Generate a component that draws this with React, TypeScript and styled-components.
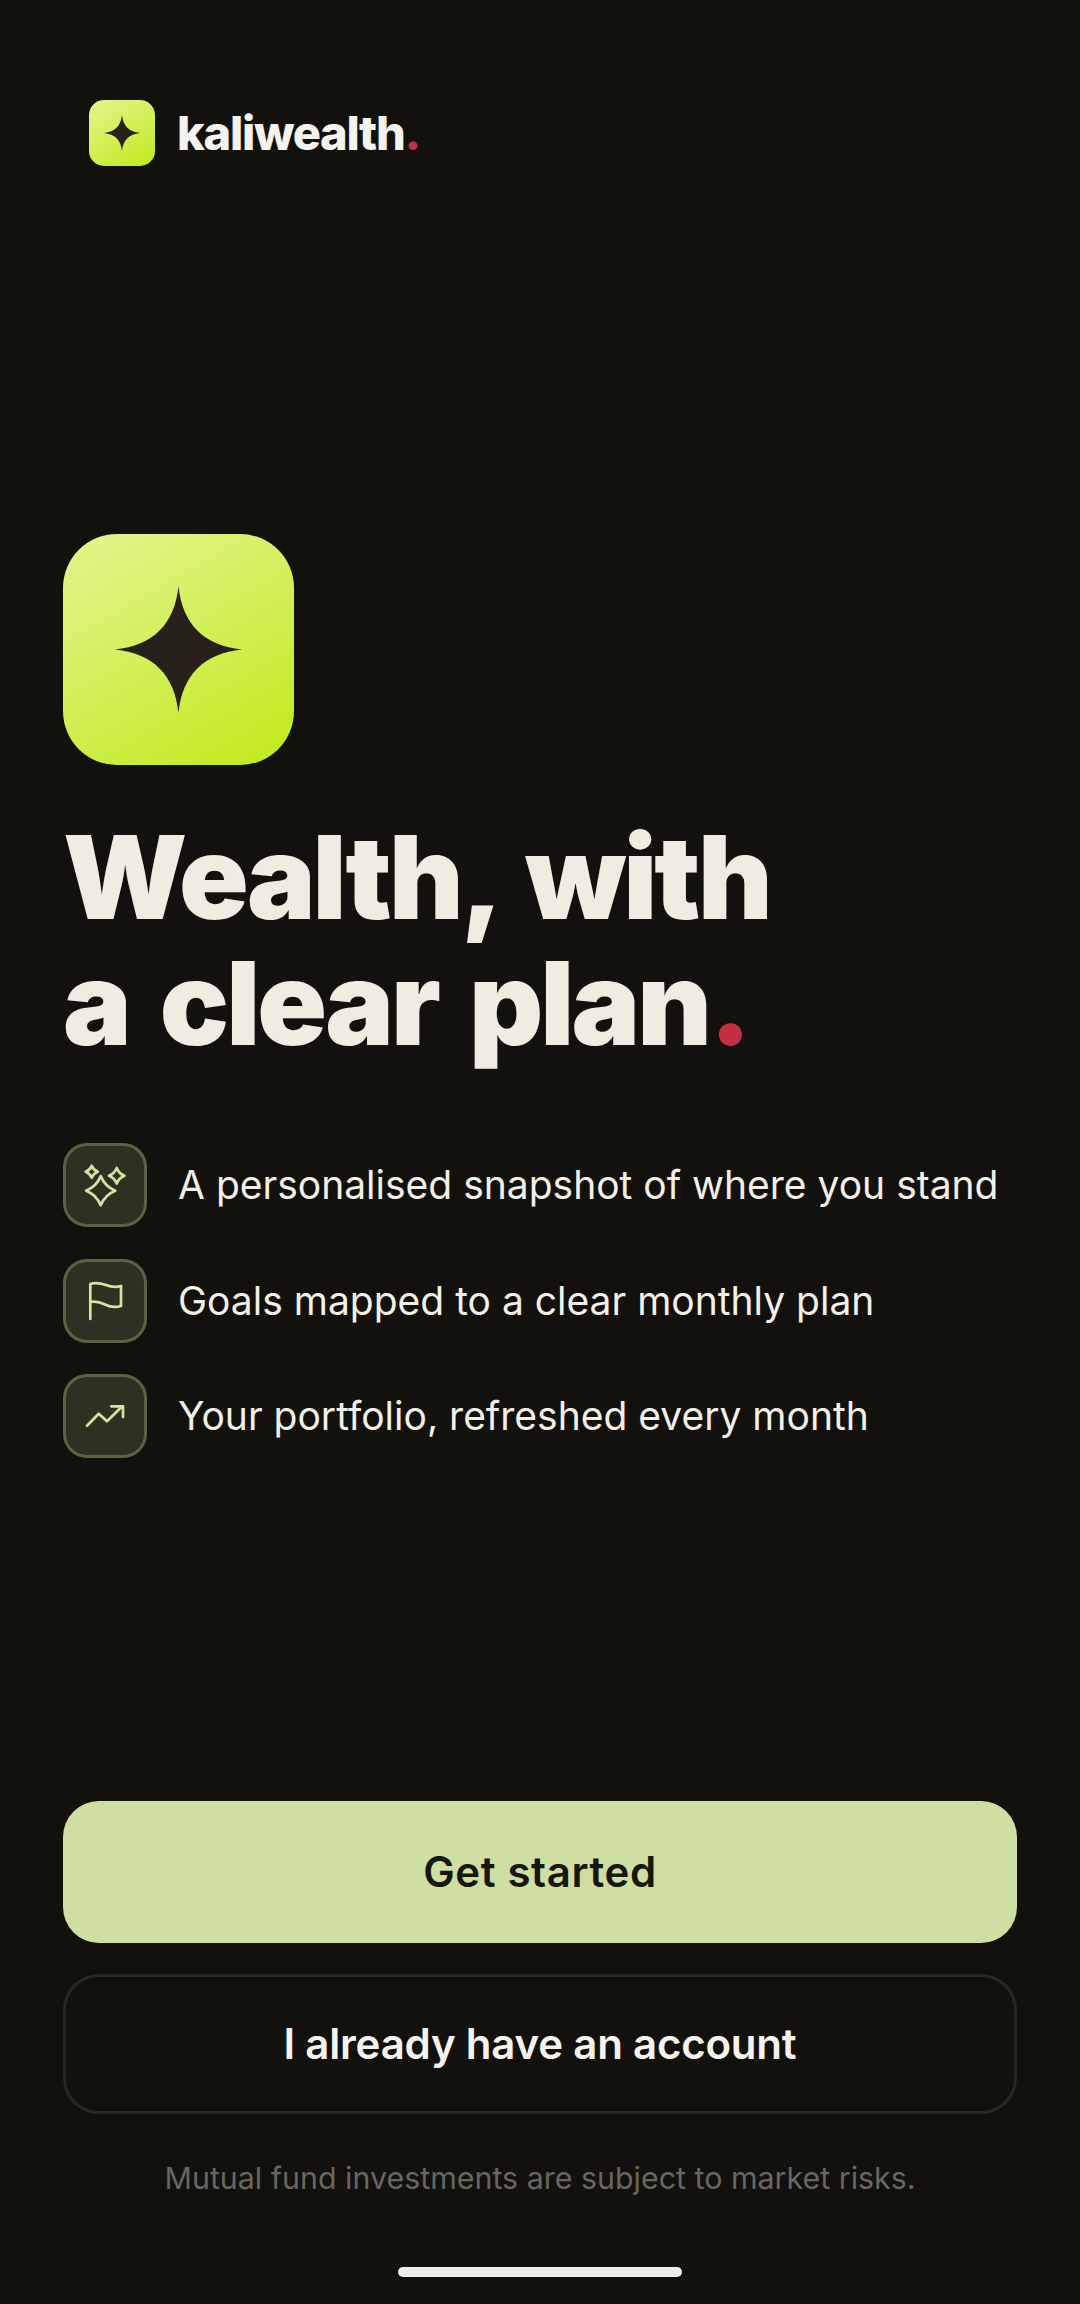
import React from "react";
import styled, { createGlobalStyle } from "styled-components";

const Global = createGlobalStyle`
  html, body { margin: 0; padding: 0; background: #12110d; }
  * { box-sizing: border-box; }
`;

const Page = styled.main`
  width: 1080px;
  height: 2304px;
  background: #12110d;
  padding: 100px 63px 27px;
  display: flex;
  flex-direction: column;
  font-family: Inter, "Liberation Sans", sans-serif;
  color: #f5f3ee;
`;

const Brand = styled.header`
  display: flex;
  align-items: center;
  gap: 22px;
  padding-left: 26px;
`;

const LogoTile = styled.div<{ $size: number; $radius: number }>`
  width: ${(p) => p.$size}px;
  height: ${(p) => p.$size}px;
  border-radius: ${(p) => p.$radius}px;
  background: linear-gradient(150deg, #e4f58f 0%, #d2ef56 50%, #c0ea18 100%);
  display: flex;
  align-items: center;
  justify-content: center;
  flex: none;
`;

const Wordmark = styled.div`
  font-size: 47px;
  line-height: 66px;
  font-weight: 800;
  letter-spacing: -1.3px;
  color: #f5f3ee;
`;

const Dot = styled.span`
  color: #c22f42;
`;

const HeroTile = styled.div`
  margin-top: 368px;
`;

const Headline = styled.h1`
  margin: 50px 0 0;
  font-size: 115px;
  line-height: 126px;
  font-weight: 900;
  letter-spacing: -2.9px;
  word-spacing: 11px;
  color: #f0ece2;
`;

const Features = styled.ul`
  list-style: none;
  margin: 76px 0 0;
  padding: 0;
  display: flex;
  flex-direction: column;
  gap: 31.5px;
`;

const Feature = styled.li`
  display: flex;
  align-items: center;
  gap: 31px;
  font-size: 39px;
  line-height: 50px;
  font-weight: 400;
  color: #f3f0e8;
`;

const IconTile = styled.div`
  width: 84px;
  height: 84px;
  border-radius: 24px;
  border: 3px solid #5a6244;
  background: #2f3022;
  flex: none;
  display: flex;
  align-items: center;
  justify-content: center;
  svg {
    display: block;
    margin: -3px;
    flex: none;
  }
`;

const Actions = styled.div`
  margin-top: auto;
  display: flex;
  flex-direction: column;
  align-items: stretch;
  gap: 31px;
`;

const Button = styled.button<{ $primary?: boolean }>`
  height: ${(p) => (p.$primary ? 142 : 140)}px;
  border-radius: 36px;
  border: ${(p) => (p.$primary ? "none" : "3px solid #272723")};
  background: ${(p) => (p.$primary ? "#cfdfa2" : "transparent")};
  color: ${(p) => (p.$primary ? "#17160f" : "#f5f3ee")};
  font-family: Inter, "Liberation Sans", sans-serif;
  font-size: 42px;
  letter-spacing: ${(p) => (p.$primary ? "0.6px" : "-0.2px")};
  font-weight: 600;
  padding: 0 0 2px;
`;

const Note = styled.p`
  margin: 44px 0 0;
  text-align: center;
  font-size: 30.4px;
  line-height: 40px;
  color: #67665f;
`;

const HomeBar = styled.div`
  width: 284px;
  height: 10px;
  border-radius: 5px;
  background: #eeeeee;
  margin: 69px auto 0;
`;

const STAR = "M50 0 C53 30 70 47 100 50 C70 53 53 70 50 100 C47 70 30 53 0 50 C30 47 47 30 50 0 Z";

const Star = ({ size }: { size: number }) => (
  <svg width={size} height={size} viewBox="0 0 100 100">
    <path d={STAR} fill="#26221b" />
  </svg>
);

const iconProps = {
  width: 84,
  height: 84,
  viewBox: "0 0 84 84",
  fill: "none",
  stroke: "#d0e5a0",
  strokeWidth: 2.7,
  strokeLinecap: "round" as const,
  strokeLinejoin: "round" as const,
};

const sparkle = (cx: number, cy: number, r: number) => {
  const k = r * 0.28;
  return `M${cx} ${cy - r} Q${cx + k} ${cy - k} ${cx + r} ${cy} Q${cx + k} ${cy + k} ${cx} ${cy + r} Q${cx - k} ${cy + k} ${cx - r} ${cy} Q${cx - k} ${cy - k} ${cx} ${cy - r} Z`;
};

const SparklesIcon = () => (
  <svg {...iconProps}>
    <path d={sparkle(37.7, 47.7, 14.6)} />
    <path d={sparkle(28.7, 28.7, 6)} />
    <path d={sparkle(53.7, 32.7, 7.8)} />
  </svg>
);

const FlagIcon = () => (
  <svg {...iconProps}>
    <path d="M27.3 60 V25 C33 23 37 24 43 26 C48 28 53 28.5 58 27 V47 C53 48.5 47 48 42 45.5 C37 43 32 42 27.3 43" />
  </svg>
);

const TrendIcon = () => (
  <svg {...iconProps}>
    <path d="M24 51.7 L35.7 39.7 L44 47.3 L59.3 32.3" />
    <path d="M48.3 32.3 H60 V43" />
  </svg>
);

const features = [
  { icon: <SparklesIcon />, text: "A personalised snapshot of where you stand" },
  { icon: <FlagIcon />, text: "Goals mapped to a clear monthly plan" },
  { icon: <TrendIcon />, text: "Your portfolio, refreshed every month" },
];

export default function App() {
  return (
    <Page>
      <Global />
      <Brand>
        <LogoTile $size={66} $radius={15}>
          <Star size={36} />
        </LogoTile>
        <Wordmark>
          kaliwealth<Dot>.</Dot>
        </Wordmark>
      </Brand>
      <HeroTile>
        <LogoTile $size={231} $radius={54}>
          <Star size={127} />
        </LogoTile>
      </HeroTile>
      <Headline>
        Wealth, with
        <br />
        a clear plan<Dot>.</Dot>
      </Headline>
      <Features>
        {features.map((f) => (
          <Feature key={f.text}>
            <IconTile>{f.icon}</IconTile>
            {f.text}
          </Feature>
        ))}
      </Features>
      <Actions>
        <Button $primary>Get started</Button>
        <Button>I already have an account</Button>
      </Actions>
      <Note>Mutual fund investments are subject to market risks.</Note>
      <HomeBar />
    </Page>
  );
}
